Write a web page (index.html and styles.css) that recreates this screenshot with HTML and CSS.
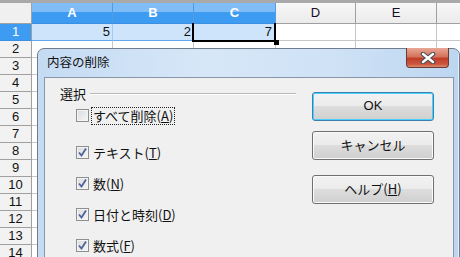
FILE: index.html
```html
<!DOCTYPE html>
<html>
<head>
<meta charset="utf-8">
<link rel="stylesheet" href="styles.css">
</head>
<body>
<div class="sheet">
  <div class="grid">
    <div class="corner"></div>
    <div class="ch sel">A</div>
    <div class="ch sel">B</div>
    <div class="ch sel">C</div>
    <div class="ch">D</div>
    <div class="ch">E</div>
    <div class="ch last"></div>

    <div class="rh sel">1</div>
    <div class="c r1">5</div>
    <div class="c r1">2</div>
    <div class="c r1 cur">7<span class="handle"></span></div>
    <div class="c r1b"></div>
    <div class="c r1b"></div>
    <div class="c r1b last"></div>

    <div class="rh">2</div><div class="c"></div><div class="c"></div><div class="c"></div><div class="c"></div><div class="c"></div><div class="c last"></div>
    <div class="rh">3</div><div class="c"></div><div class="c"></div><div class="c"></div><div class="c"></div><div class="c"></div><div class="c last"></div>
    <div class="rh">4</div><div class="c"></div><div class="c"></div><div class="c"></div><div class="c"></div><div class="c"></div><div class="c last"></div>
    <div class="rh">5</div><div class="c"></div><div class="c"></div><div class="c"></div><div class="c"></div><div class="c"></div><div class="c last"></div>
    <div class="rh">6</div><div class="c"></div><div class="c"></div><div class="c"></div><div class="c"></div><div class="c"></div><div class="c last"></div>
    <div class="rh">7</div><div class="c"></div><div class="c"></div><div class="c"></div><div class="c"></div><div class="c"></div><div class="c last"></div>
    <div class="rh">8</div><div class="c"></div><div class="c"></div><div class="c"></div><div class="c"></div><div class="c"></div><div class="c last"></div>
    <div class="rh">9</div><div class="c"></div><div class="c"></div><div class="c"></div><div class="c"></div><div class="c"></div><div class="c last"></div>
    <div class="rh">10</div><div class="c"></div><div class="c"></div><div class="c"></div><div class="c"></div><div class="c"></div><div class="c last"></div>
    <div class="rh">11</div><div class="c"></div><div class="c"></div><div class="c"></div><div class="c"></div><div class="c"></div><div class="c last"></div>
    <div class="rh">12</div><div class="c"></div><div class="c"></div><div class="c"></div><div class="c"></div><div class="c"></div><div class="c last"></div>
    <div class="rh">13</div><div class="c"></div><div class="c"></div><div class="c"></div><div class="c"></div><div class="c"></div><div class="c last"></div>
    <div class="rh">14</div><div class="c"></div><div class="c"></div><div class="c"></div><div class="c"></div><div class="c"></div><div class="c last"></div>
  </div>

  <div class="dialog">
    <div class="titlebar">
      <span class="title">内容の削除</span>
      <div class="close">
        <svg width="18" height="12" viewBox="0 0 18 12">
          <path d="M4 2 L14 10 M14 2 L4 10" stroke="#4a4f58" stroke-width="4.6" stroke-linecap="round"/>
          <path d="M4 2 L14 10 M14 2 L4 10" stroke="#ffffff" stroke-width="2.4" stroke-linecap="round"/>
        </svg>
      </div>
    </div>
    <div class="client">
      <div class="group">
        <div class="legend"><span>選択</span><i class="rule"></i></div>
        <div class="opts">
          <label class="opt first"><span class="box"></span><span class="lbl focus">すべて削除(<u>A</u>)</span></label>
          <label class="opt"><span class="box on"><svg width="11" height="11" viewBox="0 0 11 11"><path d="M2 5.5 L4.5 8.5 L9 1.5" fill="none" stroke="#4c629c" stroke-width="1.8"/></svg></span><span class="lbl">テキスト(<u>T</u>)</span></label>
          <label class="opt"><span class="box on"><svg width="11" height="11" viewBox="0 0 11 11"><path d="M2 5.5 L4.5 8.5 L9 1.5" fill="none" stroke="#4c629c" stroke-width="1.8"/></svg></span><span class="lbl">数(<u>N</u>)</span></label>
          <label class="opt"><span class="box on"><svg width="11" height="11" viewBox="0 0 11 11"><path d="M2 5.5 L4.5 8.5 L9 1.5" fill="none" stroke="#4c629c" stroke-width="1.8"/></svg></span><span class="lbl">日付と時刻(<u>D</u>)</span></label>
          <label class="opt"><span class="box on"><svg width="11" height="11" viewBox="0 0 11 11"><path d="M2 5.5 L4.5 8.5 L9 1.5" fill="none" stroke="#4c629c" stroke-width="1.8"/></svg></span><span class="lbl">数式(<u>F</u>)</span></label>
        </div>
      </div>
      <div class="buttons">
        <div class="btn default">OK</div>
        <div class="btn">キャンセル</div>
        <div class="btn help">ヘルプ(<u>H</u>)</div>
      </div>
    </div>
  </div>
</div>
</body>
</html>
```

FILE: styles.css
```css
* { box-sizing: border-box; margin: 0; padding: 0; }
html, body { width: 460px; height: 257px; overflow: hidden; background: #ffffff; }
body { font-family: "Liberation Sans", "Noto Sans CJK JP", sans-serif; }

.sheet { position: relative; width: 460px; height: 257px; border-top: 3px solid #a9a9a9; overflow: hidden; }

.grid {
  display: grid;
  grid-template-columns: 32px 81px 81px 82px 80px 81px 30px;
  grid-template-rows: 21px repeat(14, 17px);
}

.corner { background: #f0f0f0; border-right: 1px solid #a0a0a0; border-bottom: 1px solid #a0a0a0; }

.ch {
  background: linear-gradient(#f7f7f7, #ebebeb);
  border-right: 1px solid #a0a0a0;
  border-bottom: 1px solid #a0a0a0;
  font-size: 13px;
  color: #1a0a2a;
  text-align: center;
  line-height: 20px;
}
.ch.sel {
  background: linear-gradient(#80bdf7 0, #80bdf7 45%, #3d9bf2 45%, #3d9bf2 100%);
  color: #ffffff;
  font-weight: bold;
  border-right: 1px solid #4c9ce6;
  border-bottom: 1px solid #3a8fe3;
}
.ch.last { border-right: none; }

.rh {
  background: #f2f2f2;
  border-right: 1px solid #a0a0a0;
  border-bottom: 1px solid #a0a0a0;
  font-size: 13px;
  text-align: center;
  line-height: 16px;
  color: #111111;
}
.rh.sel { background: #3d9bf2; color: #ffffff; border-bottom-color: #3a8fe3; }

.c {
  border-right: 1px solid #c6c6c6;
  border-bottom: 1px solid #c6c6c6;
  font-size: 13px;
  text-align: right;
  line-height: 16px;
  padding-right: 2px;
  color: #111111;
}
.c.last { border-right: none; }
.c.r1 { background: #cde4fa; border-right-color: #a6c9ec; border-bottom-color: #5fa8ec; }
.c.r1b { border-bottom-color: #c6c6c6; }
.c.cur { position: relative; padding-right: 3px; }
.c.cur::after {
  content: "";
  position: absolute;
  left: -2px; top: -1px; right: -1px; bottom: -2px;
  border: 2px solid #000000;
  border-top: none;
}
.handle {
  position: absolute;
  right: -4px; bottom: -5px;
  width: 5px; height: 5px;
  background: #000000;
  z-index: 2;
}

.dialog {
  position: absolute;
  left: 37px; top: 45px;
  width: 423px; height: 230px;
  border: 1px solid #6f7d8e;
  border-radius: 7px 7px 0 0;
  background: linear-gradient(90deg, #c4dbf3 0%, #d7e7f8 40%, #cfe2f6 70%, #bdd6f0 100%);
  box-shadow: -1px -1px 0 rgba(255,255,255,0.6) inset;
  z-index: 5;
  font-family: "Noto Sans CJK JP", "Liberation Sans", sans-serif;
}
.titlebar {
  height: 28px;
  display: flex;
  align-items: flex-start;
  position: relative;
}
.title {
  font-size: 12.5px;
  color: #101010;
  margin: 5px 0 0 9px;
  line-height: 16px;
}
.close {
  position: absolute;
  right: 10px; top: -1px;
  width: 43px; height: 20px;
  border: 1px solid #6b3a33;
  border-top: none;
  border-radius: 0 0 4px 4px;
  background: linear-gradient(#e9a796 0%, #d5745e 45%, #c13d28 55%, #cb5640 85%, #e08a6c 100%);
  display: flex;
  align-items: center;
  justify-content: center;
}

.client {
  position: absolute;
  left: 6px; top: 28px;
  width: 410px; height: 205px;
  border: 1px solid #8796a8;
  background: #f0f0f0;
  display: flex;
  font-size: 13px;
  color: #111111;
}
.group { width: 251px; padding: 8px 0 0 15px; }
.legend { display: flex; align-items: center; height: 16px; line-height: 16px; }
.legend span { flex: none; margin-right: 4px; }
.rule { flex: 1; height: 0; border-top: 1px solid #b9b9b9; border-bottom: 1px solid #ffffff; margin-top: -1px; }

.opts { display: flex; flex-direction: column; padding-left: 16px; margin-top: 5px; }
.opt { display: flex; align-items: center; height: 17px; margin-bottom: 14px; }
.opt.first { margin-bottom: 20px; }
.box {
  width: 13px; height: 13px;
  border: 1px solid #8e8f8f;
  background: linear-gradient(135deg, #dcdcdc, #f6f6f6);
  box-shadow: inset 0 0 0 1px #f4f4f4;
  display: flex; align-items: center; justify-content: center;
  margin-right: 3px;
  flex: none;
}
.lbl { line-height: 16px; padding: 0 1px; }
.lbl.focus { outline: 1px dotted #222222; outline-offset: 0; }
u { text-decoration: underline; text-underline-offset: 1px; }

.buttons { display: flex; flex-direction: column; padding-top: 14px; margin-left: 16px; }
.btn {
  width: 122px; height: 29px;
  border: 1px solid #707070;
  border-radius: 3px;
  background: linear-gradient(#f2f2f2 0%, #ebebeb 50%, #dddddd 50%, #cfcfcf 100%);
  box-shadow: inset 0 0 0 1px #fafafa;
  text-align: center;
  line-height: 26px;
  font-size: 13px;
  color: #111111;
  margin-bottom: 10px;
}
.btn.default {
  border-color: #3c7fb1;
  box-shadow: inset 0 0 0 1px #48d2fb;
  font-family: "Liberation Sans", sans-serif;
}
.btn.help { margin-top: 5px; }
```
